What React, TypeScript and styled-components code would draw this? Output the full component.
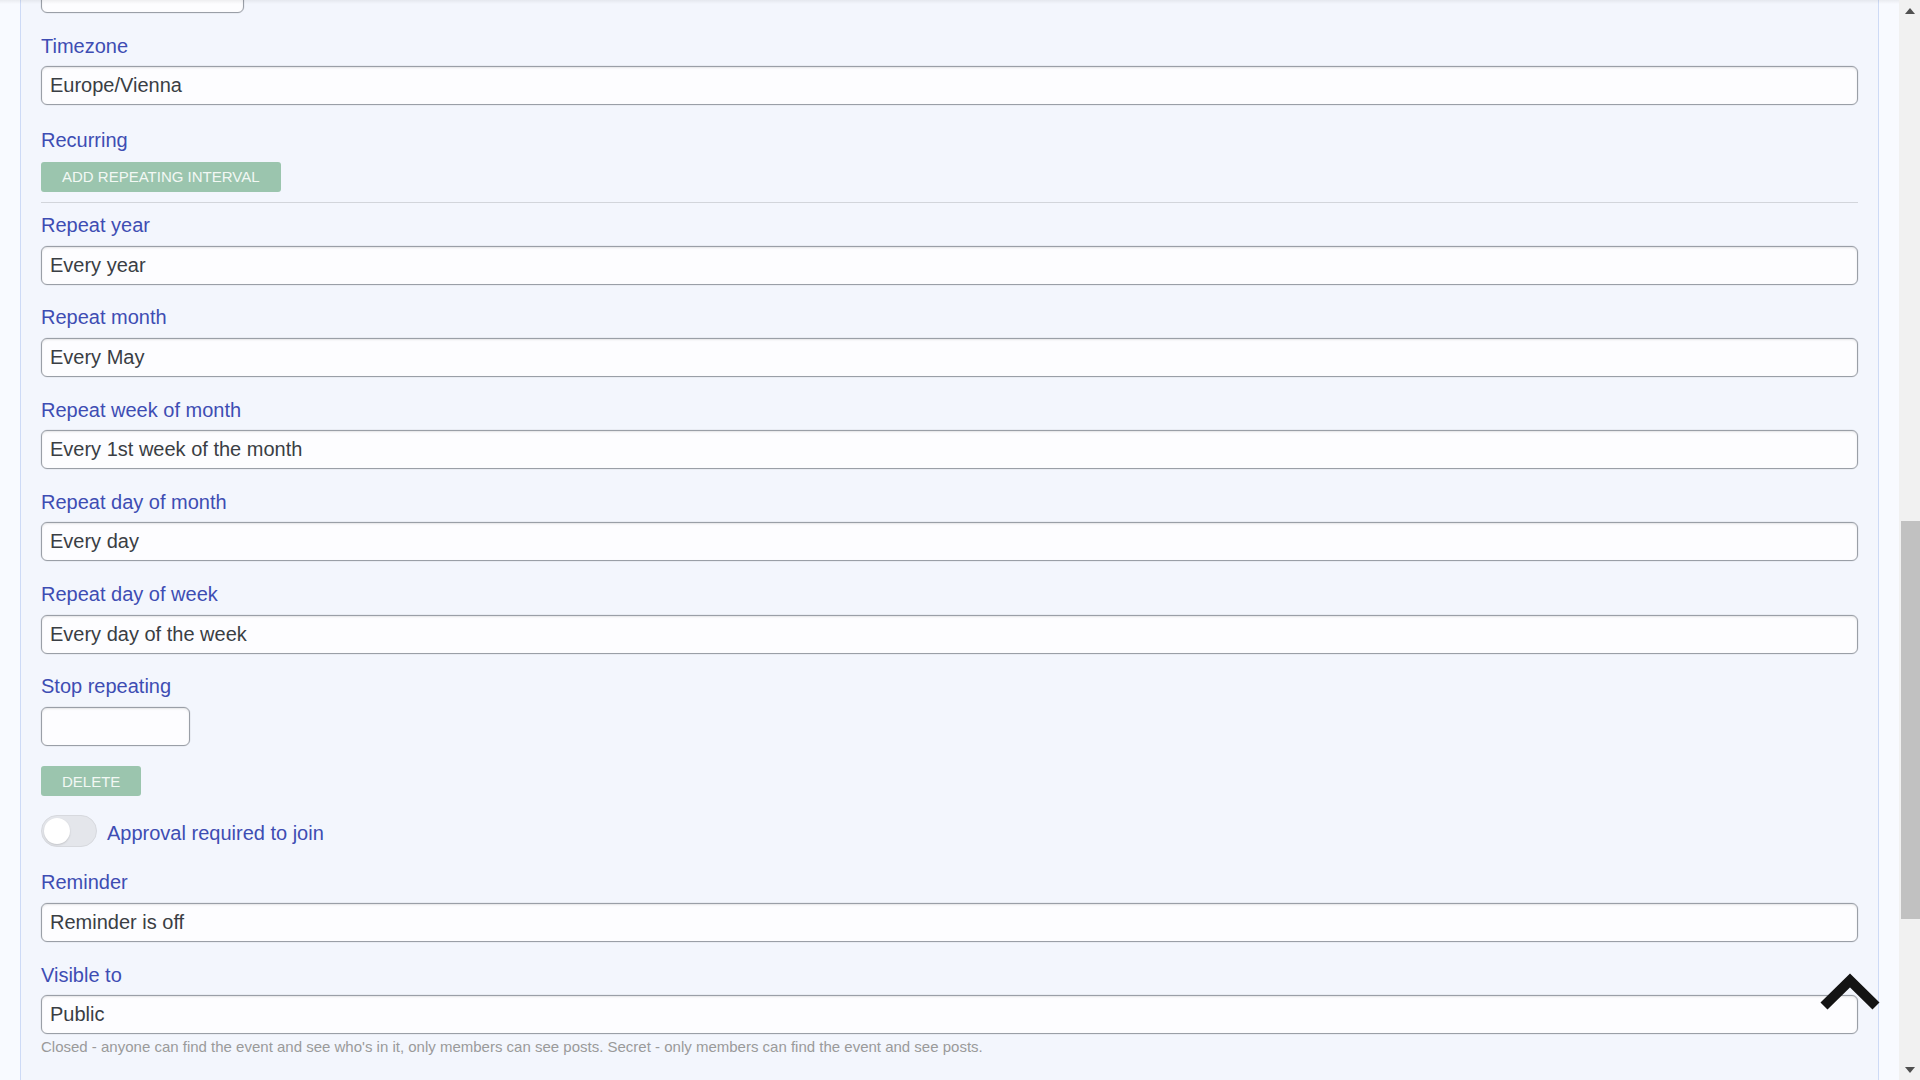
import React, { useLayoutEffect, useRef } from "react";
import styled, { createGlobalStyle } from "styled-components";

const GlobalStyle = createGlobalStyle`
  html, body { margin: 0; padding: 0; height: 100%; overflow: hidden; }
  body { font-family: "Liberation Sans", Arial, sans-serif; background: #f8faff; }
  #root { height: 100%; }
  * { box-sizing: border-box; }
`;

const Page = styled.div`
  display: flex;
  height: 100vh;
  width: 100vw;
  background: #f8faff;
  position: relative;
`;

const Scroller = styled.div`
  flex: 1;
  height: 100%;
  overflow: hidden;
  position: relative;
`;

const TopShade = styled.div`
  position: absolute;
  left: 0;
  right: 21px;
  top: 0;
  height: 4px;
  background: linear-gradient(rgba(0, 0, 0, 0.06), rgba(0, 0, 0, 0));
  pointer-events: none;
  z-index: 2;
`;

const Panel = styled.div`
  margin: 0 20px;
  background: #f3f6fd;
  border-left: 1px solid #cddaf6;
  border-right: 1px solid #cddaf6;
  padding: 60px 20px 120px;
  display: flex;
  flex-direction: column;
`;

const Field = styled.div<{ $gap?: number }>`
  display: flex;
  flex-direction: column;
  align-items: flex-start;
  margin-bottom: ${(p) => (p.$gap ?? 18.75)}px;
`;

const Label = styled.label<{ $mb?: number; $mt?: number }>`
  font-size: 20px;
  line-height: 28.5px;
  color: #3e4db3;
  margin-top: ${(p) => p.$mt ?? 0}px;
  margin-bottom: ${(p) => (p.$mb ?? 6)}px;
`;

const Input = styled.input<{ $width?: number }>`
  width: ${(p) => (p.$width ? `${p.$width}px` : "100%")};
  height: 39px;
  border: 1px solid #9a9fa7;
  border-radius: 6px;
  background: #fdfdff;
  box-shadow: inset 0 1px 2px rgba(0, 0, 0, 0.1), 0 0 0 0.5px rgba(0, 0, 0, 0.08);
  padding: 0 8px;
  font-family: "Liberation Sans", Arial, sans-serif;
  font-size: 20px;
  color: #3a3e44;
  outline: none;
`;

const GreenButton = styled.button<{ $mt?: number }>`
  height: 29.5px;
  padding: 0 21px;
  margin-top: ${(p) => p.$mt ?? 0}px;
  border: none;
  border-radius: 3px;
  background: #9bc5ae;
  color: #f2f8f4;
  font-family: "Liberation Sans", Arial, sans-serif;
  font-size: 15px;
  text-transform: uppercase;
  cursor: pointer;
  align-self: flex-start;
`;

const Divider = styled.hr`
  width: 100%;
  border: none;
  border-top: 1px solid #d2d5db;
  margin: 10.5px 0 8px;
`;

const ToggleRow = styled.div`
  display: flex;
  align-items: center;
  gap: 10px;
  margin: 19px 0 21.5px;
  height: 32px;
`;

const Track = styled.span`
  width: 56px;
  height: 32px;
  border-radius: 16px;
  background: #e4e6eb;
  border: 1px solid #d7d9de;
  display: flex;
  align-items: center;
  padding-left: 2px;
`;

const Knob = styled.span`
  width: 26px;
  height: 26px;
  border-radius: 50%;
  background: #ffffff;
  box-shadow: 0 1px 2px rgba(0, 0, 0, 0.15);
`;

const ToggleText = styled.span`
  font-size: 20px;
  line-height: 28.5px;
  color: #3e4db3;
  padding-top: 4px;
`;

const Help = styled.div`
  margin-top: 2px;
  font-size: 15px;
  line-height: 21.4px;
  color: #9a9a9a;
`;

const ScrollTrack = styled.div`
  width: 21px;
  height: 100%;
  background: #f1f1f1;
  display: flex;
  flex-direction: column;
`;

const ArrowBox = styled.div`
  height: 21px;
  display: flex;
  align-items: center;
  justify-content: center;
`;

const TrackBody = styled.div`
  flex: 1;
  display: flex;
  flex-direction: column;
`;

const Thumb = styled.div<{ $top: number; $height: number }>`
  margin-top: ${(p) => p.$top}px;
  height: ${(p) => p.$height}px;
  margin-left: 2px;
  width: 19px;
  background: #c1c1c1;
`;

const ToTop = styled.svg`
  position: fixed;
  left: 1814px;
  top: 968px;
  width: 72px;
  height: 50px;
  z-index: 5;
`;

const fields: { label: string; value: string }[] = [
  { label: "Repeat year", value: "Every year" },
  { label: "Repeat month", value: "Every May" },
  { label: "Repeat week of month", value: "Every 1st week of the month" },
  { label: "Repeat day of month", value: "Every day" },
  { label: "Repeat day of week", value: "Every day of the week" },
];

export default function App() {
  const scrollerRef = useRef<HTMLDivElement>(null);
  const anchorRef = useRef<HTMLInputElement>(null);

  useLayoutEffect(() => {
    const s = scrollerRef.current;
    const a = anchorRef.current;
    if (!s || !a) return;
    const sr = s.getBoundingClientRect();
    const ar = a.getBoundingClientRect();
    s.scrollTop = ar.bottom - sr.top + s.scrollTop - 13;
  }, []);

  return (
    <>
      <GlobalStyle />
      <Page>
        <TopShade />
        <Scroller ref={scrollerRef}>
          <Panel>
            <Field>
              <Input ref={anchorRef} $width={203} readOnly defaultValue="" aria-label="End time" />
            </Field>
            <Field>
              <Label>Timezone</Label>
              <Input readOnly defaultValue="Europe/Vienna" />
            </Field>
            <Field $gap={0}>
              <Label $mb={8} $mt={1.5}>Recurring</Label>
              <GreenButton>Add repeating interval</GreenButton>
            </Field>
            <Divider />
            {fields.map((f) => (
              <Field key={f.label}>
                <Label>{f.label}</Label>
                <Input readOnly defaultValue={f.value} />
              </Field>
            ))}
            <Field $gap={0}>
              <Label>Stop repeating</Label>
              <Input $width={149} readOnly defaultValue="" />
            </Field>
            <GreenButton $mt={20.5}>Delete</GreenButton>
            <ToggleRow>
              <Track>
                <Knob />
              </Track>
              <ToggleText>Approval required to join</ToggleText>
            </ToggleRow>
            <Field $gap={19}>
              <Label>Reminder</Label>
              <Input readOnly defaultValue="Reminder is off" />
            </Field>
            <Field $gap={0}>
              <Label>Visible to</Label>
              <Input readOnly defaultValue="Public" />
              <Help>
                Closed - anyone can find the event and see who's in it, only members can see posts. Secret - only members can find the event and see posts.
              </Help>
            </Field>
          </Panel>
        </Scroller>
        <ScrollTrack>
          <ArrowBox>
            <svg width="10" height="6" viewBox="0 0 10 6">
              <polygon points="0,6 10,6 5,0" fill="#505050" />
            </svg>
          </ArrowBox>
          <TrackBody>
            <Thumb $top={499.5} $height={398} />
          </TrackBody>
          <ArrowBox>
            <svg width="10" height="6" viewBox="0 0 10 6">
              <polygon points="0,0 10,0 5,6" fill="#505050" />
            </svg>
          </ArrowBox>
        </ScrollTrack>
        <ToTop viewBox="0 0 72 50">
          <polyline
            points="10,38 36,12.5 62,38"
            fill="none"
            stroke="#141414"
            strokeWidth="10"
            strokeLinejoin="miter"
            strokeLinecap="butt"
          />
        </ToTop>
      </Page>
    </>
  );
}
